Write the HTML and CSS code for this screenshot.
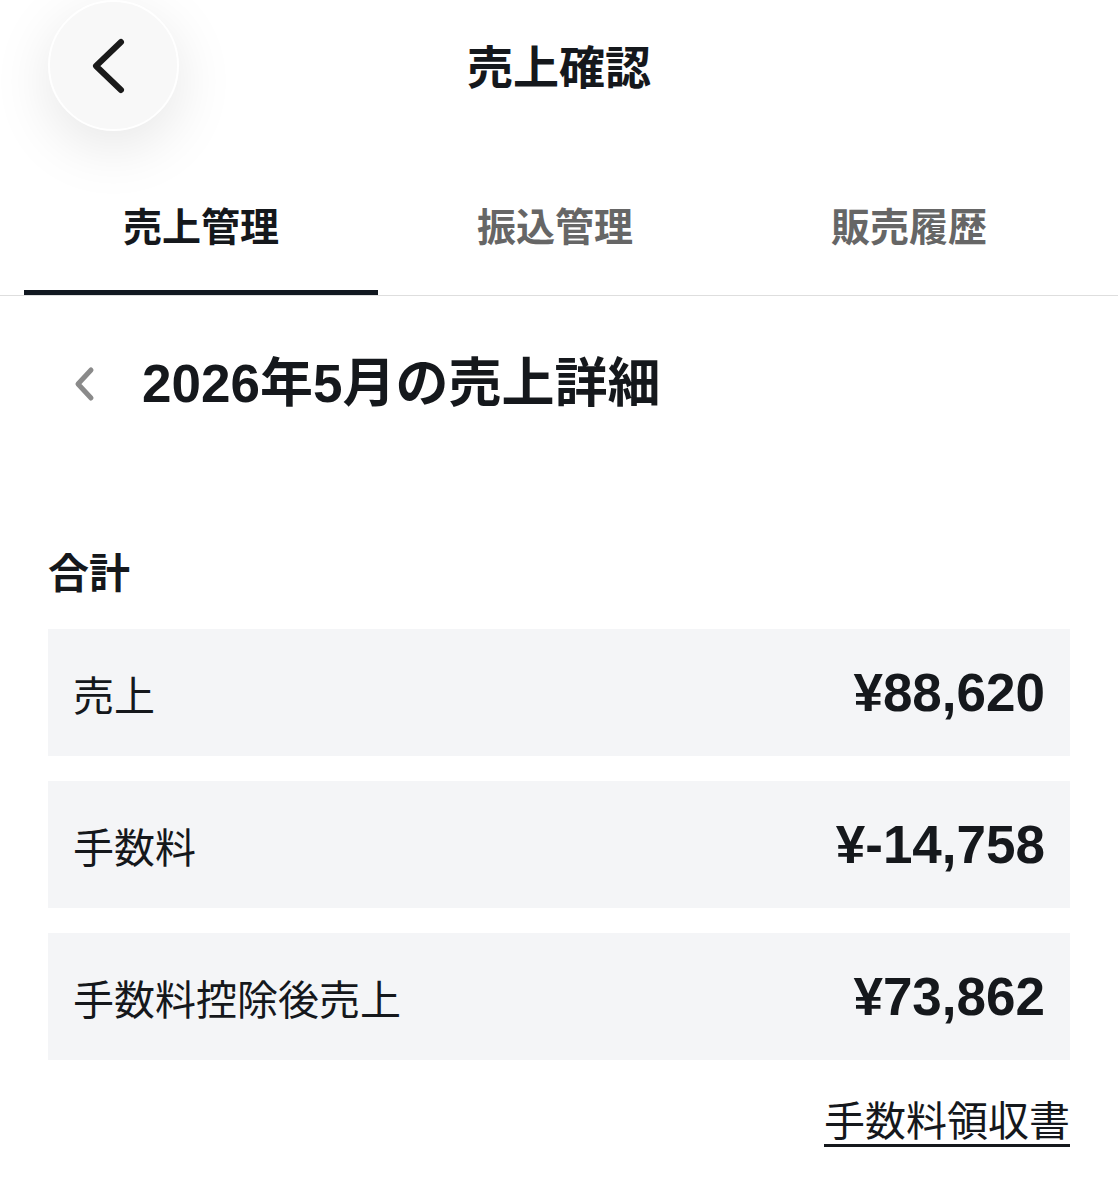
FILE: index.html
```html
<!DOCTYPE html>
<html lang="ja">
<head>
  <meta charset="UTF-8">
  <meta name="viewport" content="width=device-width, initial-scale=1.0">
  <title>売上確認</title>
  <link rel="stylesheet" href="styles.css">
</head>
<body>
  <header class="topbar">
    <button class="back-btn" aria-label="戻る">
      <svg width="40" height="60" viewBox="0 0 40 60">
        <path d="M31 6 L6 30 L31 54" fill="none" stroke="#1a1a1a" stroke-width="6" stroke-linecap="round" stroke-linejoin="round"/>
      </svg>
    </button>
    <h1 class="title">売上確認</h1>
  </header>

  <nav class="tabs">
    <div class="tab active">売上管理</div>
    <div class="tab">振込管理</div>
    <div class="tab">販売履歴</div>
  </nav>

  <main class="content">
    <div class="subhead">
      <svg class="subhead-back" width="28" height="36" viewBox="0 0 28 36">
        <path d="M21 4 L8 18 L21 32" fill="none" stroke="#8a8a8a" stroke-width="5" stroke-linecap="round" stroke-linejoin="round"/>
      </svg>
      <h2 class="subhead-title">2026年5月の売上詳細</h2>
    </div>

    <section class="summary">
      <h3 class="summary-title">合計</h3>
      <div class="rows">
        <div class="row">
          <span class="row-label">売上</span>
          <span class="row-value">¥88,620</span>
        </div>
        <div class="row">
          <span class="row-label">手数料</span>
          <span class="row-value">¥-14,758</span>
        </div>
        <div class="row">
          <span class="row-label">手数料控除後売上</span>
          <span class="row-value">¥73,862</span>
        </div>
      </div>
      <div class="receipt">
        <a href="#" class="receipt-link">手数料領収書</a>
      </div>
    </section>
  </main>
</body>
</html>
```

FILE: styles.css
```css
body {
  margin: 0;
  font-family: "Liberation Sans", "Noto Sans CJK JP", sans-serif;
  background: #fff;
  color: #15181c;
}

.topbar {
  display: grid;
  grid-template-columns: 1fr auto 1fr;
  align-items: center;
  height: 131px;
}

.back-btn {
  justify-self: start;
  margin-left: 48px;
  width: 131px;
  height: 131px;
  border-radius: 50%;
  border: 2px solid #fff;
  background: #f8f8f8;
  box-shadow: 0 16px 60px rgba(0, 0, 0, 0.1);
  display: flex;
  align-items: center;
  justify-content: center;
  padding: 0 8px 0 0;
  cursor: pointer;
}

.title {
  margin: 0;
  padding-top: 4px;
  font-size: 46px;
  font-weight: 700;
  line-height: 60px;
  color: #15181c;
}

.tabs {
  display: flex;
  padding: 0 32px 0 24px;
  border-bottom: 1px solid #dedede;
}

.tab {
  flex: 1;
  text-align: center;
  font-size: 39px;
  font-weight: 700;
  line-height: 50px;
  padding: 72px 0 37px;
  color: #666;
  border-bottom: 5px solid transparent;
}

.tab.active {
  color: #15181c;
  border-bottom-color: #111820;
}

.content {
  padding: 0 48px;
}

.subhead {
  display: flex;
  align-items: center;
  gap: 44px;
  margin-top: 58px;
  padding-left: 22px;
}

.subhead-title {
  margin: 0;
  font-size: 53px;
  font-weight: 700;
  line-height: 60px;
}

.summary {
  margin-top: 135px;
}

.summary-title {
  margin: 0 0 30px;
  font-size: 41px;
  font-weight: 700;
  line-height: 50px;
}

.rows {
  display: flex;
  flex-direction: column;
  gap: 25px;
}

.row {
  display: flex;
  justify-content: space-between;
  align-items: center;
  height: 127px;
  padding: 0 25px;
  background: #f4f5f7;
}

.row-label {
  font-size: 41px;
  font-weight: 400;
}

.row-value {
  font-size: 53px;
  font-weight: 700;
}

.receipt {
  text-align: right;
  margin-top: 37px;
}

.receipt-link {
  font-size: 41px;
  line-height: 50px;
  color: #15181c;
  text-decoration: underline;
  text-decoration-thickness: 3px;
  text-underline-offset: 8px;
}
```
